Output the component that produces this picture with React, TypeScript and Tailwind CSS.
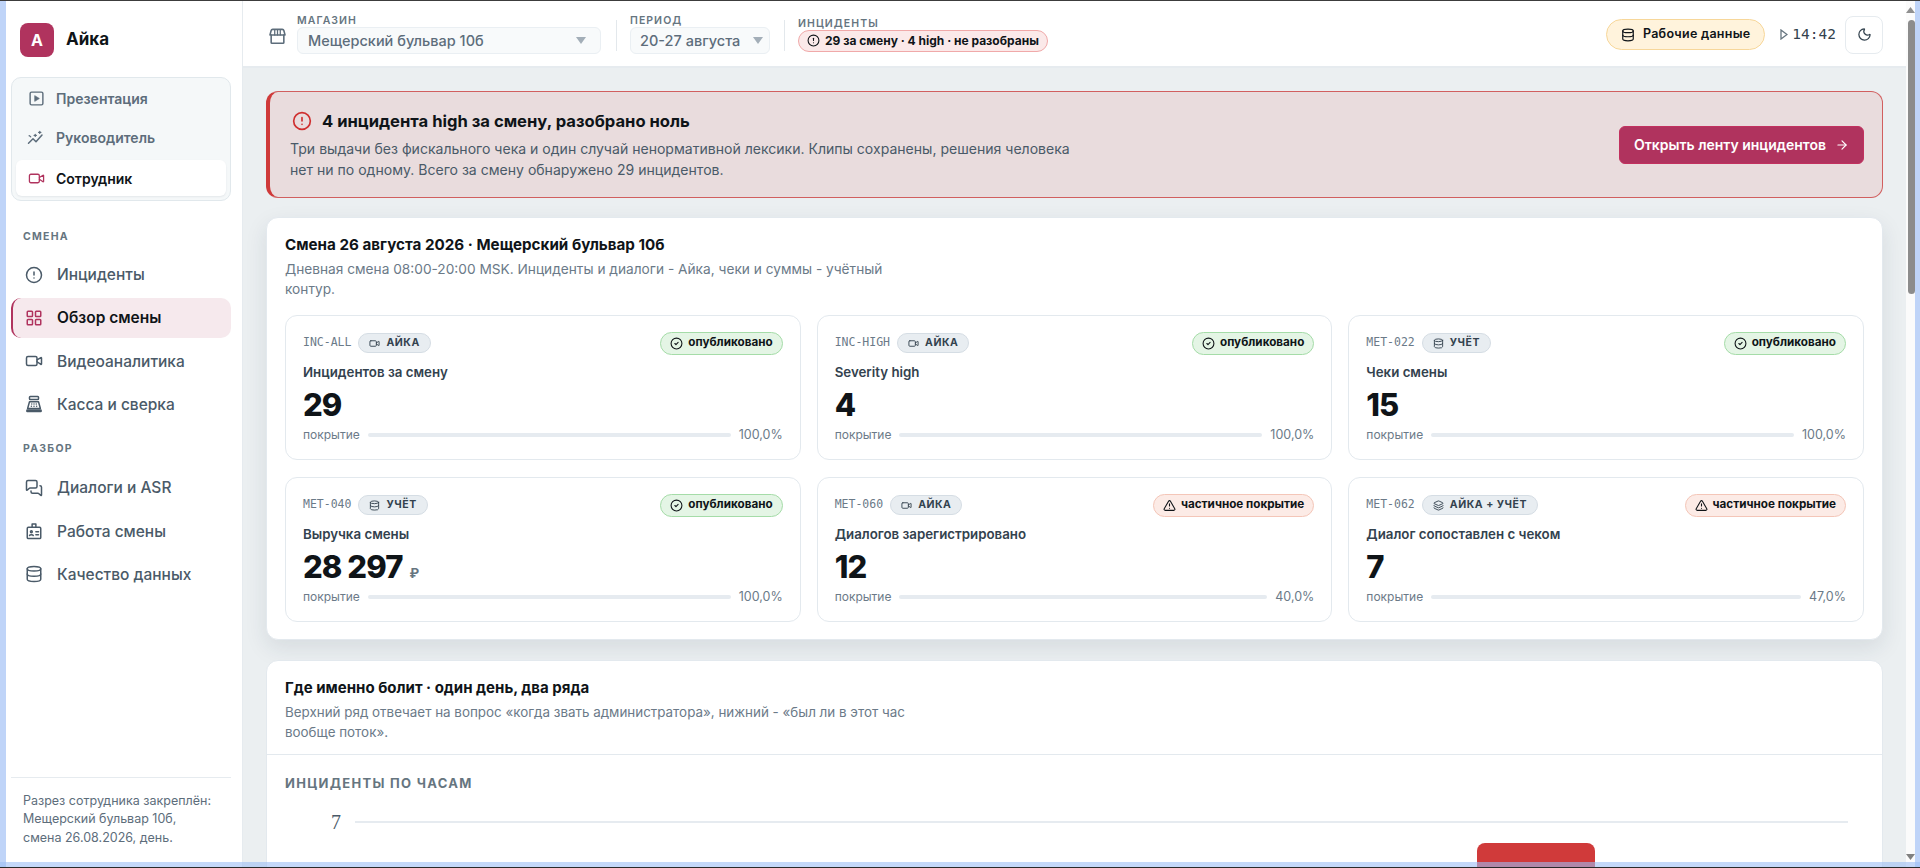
import React from "react";
import {
  Video, CircleAlert, LayoutGrid, MessagesSquare, Database, Moon, ArrowRight,
  CircleCheck, TriangleAlert, Layers,
} from "lucide-react";

function TrendSpark({ className }: { className?: string }) {
  return (
    <svg className={className} viewBox="0 0 24 24" fill="none" stroke="currentColor" strokeWidth="2" strokeLinecap="round" strokeLinejoin="round">
      <path d="M2 19l6-6 4 4 8-9" />
      <path d="M4 9.500l1 1M11 7v3M9.500 8.500h3M17 3v3M15.500 4.500h3" strokeWidth="1.600" />
      <circle cx="3" cy="9" r="1" fill="currentColor" stroke="none" />
    </svg>
  );
}

function PlayBox({ className }: { className?: string }) {
  return (
    <svg className={className} viewBox="0 0 24 24" fill="none" stroke="currentColor" strokeWidth="2" strokeLinejoin="round">
      <rect x="3" y="3" width="18" height="18" rx="2" />
      <path d="M9.500 8l6.500 4-6.500 4z" fill="currentColor" strokeWidth="1" />
    </svg>
  );
}

function StoreIcon({ className }: { className?: string }) {
  return (
    <svg className={className} viewBox="0 0 24 24" fill="none" stroke="currentColor" strokeWidth="2" strokeLinecap="round" strokeLinejoin="round">
      <path d="M4 4.500A2 2 0 0 1 6 3h12a2 2 0 0 1 2 1.500L21.500 10h-19z" />
      <path d="M8.500 3.500V10M12 3.500V10M15.500 3.500V10" strokeWidth="1.600" />
      <path d="M4 10v9.500a1 1 0 0 0 1 1h14a1 1 0 0 0 1-1V10" />
    </svg>
  );
}

function Register({ className }: { className?: string }) {
  return (
    <svg className={className} viewBox="0 0 24 24" fill="none" stroke="currentColor" strokeWidth="2" strokeLinecap="round" strokeLinejoin="round">
      <rect x="6" y="2" width="12" height="4" rx="1" />
      <path d="M6 9h12l2.500 9h-17z" />
      <path d="M9 12h.01M12 12h.01M15 12h.01M8.500 15h.01M12 15h.01M15.500 15h.01" strokeWidth="2" />
      <rect x="2.500" y="20" width="19" height="2" rx=".5" />
    </svg>
  );
}

function IdBadge({ className }: { className?: string }) {
  return (
    <svg className={className} viewBox="0 0 24 24" fill="none" stroke="currentColor" strokeWidth="2" strokeLinecap="round" strokeLinejoin="round">
      <rect x="3" y="7" width="18" height="15" rx="1.500" />
      <path d="M9.500 7V2.500h5V7" />
      <circle cx="8.500" cy="13" r="1.200" />
      <path d="M6 18c.5-1.500 4.500-1.500 5 0M14.500 13H18M14.500 17H18" />
    </svg>
  );
}

function Caret() {
  return (
    <svg width="10" height="7" viewBox="0 0 10 7" className="shrink-0 text-[#a3aeb8]">
      <path d="M0 0h10L5 7z" fill="currentColor" />
    </svg>
  );
}

function SwitchItem({ icon, label, active }: { icon: React.ReactNode; label: string; active?: boolean }) {
  return (
    <div className={active
      ? "mt-[3px] flex h-9 items-center gap-[11px] rounded-md bg-white pl-[12px] text-[14px] font-semibold text-[#0f1418] shadow-[0_1px_2px_rgba(20,40,60,0.08)]"
      : "flex h-[39px] items-center gap-[11px] pl-[12px] text-[14px] font-semibold text-[#5d6d7b]"}>
      {icon}
      <span>{label}</span>
    </div>
  );
}

function NavItem({ icon, label, active }: { icon: React.ReactNode; label: string; active?: boolean }) {
  return (
    <div className={active
      ? "flex h-10 items-center gap-[14px] rounded-[10px] border-l-2 border-[#b0335e] bg-[#f6e9ed] pl-3 text-[15.500px] font-semibold text-[#0f1418]"
      : "flex h-10 items-center gap-[14px] pl-[14px] text-[15.500px] font-medium text-[#4a5a68]"}>
      {icon}
      <span>{label}</span>
    </div>
  );
}

function SectionLabel({ children }: { children: React.ReactNode }) {
  return <div className="pl-3 text-[10.500px] font-bold tracking-[0.12em] text-[#66757f]">{children}</div>;
}

type Tile = {
  code: string; source: string; srcIcon: "video" | "db" | "layers"; title: string; value: string; unit?: string; pct: string; ok: boolean;
};

const tiles: Tile[] = [
  { code: "INC-ALL", source: "АЙКА", srcIcon: "video", title: "Инцидентов за смену", value: "29", pct: "100,0%", ok: true },
  { code: "INC-HIGH", source: "АЙКА", srcIcon: "video", title: "Severity high", value: "4", pct: "100,0%", ok: true },
  { code: "MET-022", source: "УЧЁТ", srcIcon: "db", title: "Чеки смены", value: "15", pct: "100,0%", ok: true },
  { code: "MET-040", source: "УЧЁТ", srcIcon: "db", title: "Выручка смены", value: "28 297", unit: "₽", pct: "100,0%", ok: true },
  { code: "MET-060", source: "АЙКА", srcIcon: "video", title: "Диалогов зарегистрировано", value: "12", pct: "40,0%", ok: false },
  { code: "MET-062", source: "АЙКА + УЧЁТ", srcIcon: "layers", title: "Диалог сопоставлен с чеком", value: "7", pct: "47,0%", ok: false },
];

function MetricTile({ t }: { t: Tile }) {
  const SrcIcon = t.srcIcon === "video" ? Video : t.srcIcon === "db" ? Database : Layers;
  return (
    <div className="flex h-[145px] flex-col rounded-xl border border-[#e3e9ee] bg-white px-[17px] pt-[15px]">
      <div className="flex h-[24px] items-center justify-between">
        <div className="flex items-center gap-[7px]">
          <span className="font-['DejaVu_Sans_Mono',monospace] text-[11.500px] text-[#6b7a88]">{t.code}</span>
          <span className="flex h-[20px] items-center gap-[6px] rounded-full border border-[#d5dde4] bg-[#e8edf1] px-[10px] text-[10.500px] font-bold tracking-[0.05em] text-[#33424e]">
            <SrcIcon size={11} strokeWidth={2} />
            {t.source}
          </span>
        </div>
        {t.ok ? (
          <span className="flex h-[23px] items-center gap-[5px] rounded-full border border-[#a5dca8] bg-[#e4f5e5] px-[9px] text-[11.700px] font-bold text-[#0f1418]">
            <CircleCheck size={13} strokeWidth={2} />
            опубликовано
          </span>
        ) : (
          <span className="flex h-[23px] items-center gap-[5px] rounded-full border border-[#f4c6b8] bg-[#fcebe6] px-[9px] text-[11.700px] font-bold text-[#0f1418]">
            <TriangleAlert size={13} strokeWidth={2} />
            частичное покрытие
          </span>
        )}
      </div>
      <div className="mt-[6.500px] text-[13.300px] font-semibold leading-[20px] text-[#33424e]">{t.title}</div>
      <div className="mt-[5px] flex h-[36px] items-baseline gap-[7px] text-[31px] font-extrabold leading-[36px] tracking-[-0.03em] text-[#0f1418]">
        {t.value}
        {t.unit && <span className="text-[13px] font-bold tracking-normal text-[#66757f]">{t.unit}</span>}
      </div>
      <div className="mt-[4.500px] flex items-center gap-[8px] text-[12px] leading-[16px] text-[#6b7a88]">
        <span>покрытие</span>
        <div className="h-[3.500px] flex-1 rounded-full bg-[#e6ebf0]" />
        <span className="text-[12.500px]">{t.pct}</span>
      </div>
    </div>
  );
}

export default function App() {
  return (
    <div className="relative flex h-[868px] w-[1920px] flex-col overflow-hidden border-t border-[#3c3c3c] bg-[#bfd4f8] font-['Inter',sans-serif]">
      <div className="flex min-h-0 flex-1 pl-[6px] pr-[5px]">
        <aside className="flex w-[237px] shrink-0 flex-col border-r border-[#e6ebef] bg-white pl-[5px] pr-[11px]">
          <div className="mt-[22px] flex items-center gap-3 pl-[9px]">
            <div className="flex h-[34px] w-[34px] items-center justify-center rounded-lg bg-[#b0335e] text-[16px] font-bold text-white">A</div>
            <div className="text-[17px] font-bold text-[#0f1418]">Айка</div>
          </div>
          <div className="mt-[20px] flex h-[124px] flex-col rounded-[10px] border border-[#e1e8ec] bg-[#f5f8f9] px-[4px] pt-[1px]">
            <SwitchItem icon={<PlayBox className="h-[17px] w-[17px] text-[#5d6d7b]" />} label="Презентация" />
            <SwitchItem icon={<TrendSpark className="h-[18px] w-[18px] -ml-[1px] text-[#5d6d7b]" />} label="Руководитель" />
            <SwitchItem active icon={<Video size={17} strokeWidth={1.800} className="text-[#b0335e]" />} label="Сотрудник" />
          </div>
          <div className="mt-[28px]"><SectionLabel>СМЕНА</SectionLabel></div>
          <div className="mt-[10px] flex flex-col gap-[3.200px]">
            <NavItem icon={<CircleAlert size={18} strokeWidth={2} />} label="Инциденты" />
            <NavItem active icon={<LayoutGrid size={18} strokeWidth={2} className="text-[#b0335e]" />} label="Обзор смены" />
            <NavItem icon={<Video size={18} strokeWidth={2} />} label="Видеоаналитика" />
            <NavItem icon={<Register className="h-[18px] w-[18px]" />} label="Касса и сверка" />
          </div>
          <div className="mt-[17px]"><SectionLabel>РАЗБОР</SectionLabel></div>
          <div className="mt-[11px] flex flex-col gap-[3.200px]">
            <NavItem icon={<MessagesSquare size={18} strokeWidth={2} />} label="Диалоги и ASR" />
            <NavItem icon={<IdBadge className="h-[18px] w-[18px]" />} label="Работа смены" />
            <NavItem icon={<Database size={18} strokeWidth={2} />} label="Качество данных" />
          </div>
          <div className="mt-auto mb-[21px] border-t border-[#e6ebef] px-3 pt-[14px] text-[12.500px] leading-[18.500px] text-[#5d6d7b]">
            Разрез сотрудника закреплён:<br />Мещерский бульвар 10б,<br />смена 26.08.2026, день.
          </div>
        </aside>

        <div className="flex min-w-0 flex-1 flex-col">
          <header className="flex h-[67px] shrink-0 items-center border-b-2 border-[#e6ebef] bg-white pl-[25px] pr-[23px] pt-[2px]">
            <StoreIcon className="mt-[4px] h-[19px] w-[19px] text-[#5d6d7b]" />
            <div className="ml-[10px] flex h-[39px] w-[304px] flex-col justify-between">
              <div className="text-[10.500px] font-semibold leading-[12px] tracking-[0.1em] text-[#66757f]">МАГАЗИН</div>
              <div className="flex h-[27px] items-center justify-between rounded-md border border-[#eaeff3] bg-[#f8fafb] pl-[10px] pr-[14px] text-[14.500px] font-medium text-[#5d6d7b]">
                <span>Мещерский бульвар 10б</span><Caret />
              </div>
            </div>
            <div className="ml-[15px] mt-[1px] h-[31px] w-px bg-[#e3e8ec]" />
            <div className="ml-[13px] flex h-[39px] w-[140px] flex-col justify-between">
              <div className="text-[10.500px] font-semibold leading-[12px] tracking-[0.1em] text-[#66757f]">ПЕРИОД</div>
              <div className="flex h-[27px] items-center justify-between rounded-md border border-[#eaeff3] bg-[#f8fafb] pl-[9px] pr-[6px] text-[14.500px] font-medium text-[#5d6d7b]">
                <span>20-27 августа</span><Caret />
              </div>
            </div>
            <div className="ml-[14px] mt-[1px] h-[31px] w-px bg-[#e3e8ec]" />
            <div className="ml-[13px] flex h-[34px] flex-col justify-between">
              <div className="text-[10.500px] font-semibold leading-[12px] tracking-[0.1em] text-[#66757f]">ИНЦИДЕНТЫ</div>
              <div className="flex h-[22px] items-center gap-[5px] rounded-full border border-[#f0a9a9] bg-[#fbe9e9] px-[8px] text-[12px] font-bold text-[#0f1418]">
                <CircleAlert size={13} strokeWidth={2} />
                29 за смену · 4 high · не разобраны
              </div>
            </div>
            <div className="ml-auto flex items-center">
              <div className="flex h-[31px] items-center gap-[8px] rounded-full border border-[#f7d79a] bg-[#fff3dc] px-[14px] text-[12.500px] font-semibold tracking-[0.02em] text-[#0f1418]">
                <Database size={14} strokeWidth={2} />
                Рабочие данные
              </div>
              <svg width="8" height="11" viewBox="0 0 8 11" className="ml-[15px] text-[#66757f]"><path d="M1 1l6 4.500-6 4.500z" fill="none" stroke="currentColor" strokeWidth="1.300" /></svg>
              <span className="ml-[4px] font-['DejaVu_Sans_Mono',monospace] text-[14.500px] text-[#33424e]">14:42</span>
              <div className="ml-[9px] flex h-[38px] w-[38px] items-center justify-center rounded-lg border border-[#e6ebef] bg-white text-[#33424e]">
                <Moon size={15} strokeWidth={2} />
              </div>
            </div>
          </header>

          <main className="flex min-h-0 flex-1 flex-col gap-[19px] overflow-hidden bg-[#ebeff1] pb-0 pl-[23px] pr-[23px] pt-[23px]">
            <section className="flex h-[107px] shrink-0 items-center justify-between rounded-xl border border-l-4 border-[#d15f5f] border-l-[#cf3a3a] bg-[#e9dcdd] pl-[20px] pr-[18px]">
              <div>
                <div className="flex items-center gap-[10px] pl-[2px] text-[16.600px] font-bold text-[#0f1418]">
                  <CircleAlert size={20} strokeWidth={2} className="text-[#cf2f2f]" />
                  4 инцидента high за смену, разобрано ноль
                </div>
                <p className="mt-[5px] w-[800px] text-[14.050px] leading-[21px] text-[#4a5a68]">
                  Три выдачи без фискального чека и один случай ненормативной лексики. Клипы сохранены, решения человека нет ни по одному. Всего за смену обнаружено 29 инцидентов.
                </p>
              </div>
              <div className="flex h-[38px] w-[245px] items-center justify-center gap-[9px] rounded-md border border-[#c2315f] bg-[#b0335e] text-[14px] font-semibold text-white">
                Открыть ленту инцидентов
                <ArrowRight size={14} strokeWidth={2} />
              </div>
            </section>

            <section className="shrink-0 rounded-xl border border-[#e3e9ee] bg-white px-[18px] pb-[17px] pt-[17px] shadow-[0_8px_22px_rgba(30,50,70,0.1)]">
              <h2 className="text-[15.200px] font-bold leading-[20px] text-[#0f1418]">Смена 26 августа 2026 · Мещерский бульвар 10б</h2>
              <p className="mt-[4px] w-[620px] text-[13.700px] leading-[20px] text-[#6b7a88]">
                Дневная смена 08:00-20:00 MSK. Инциденты и диалоги - Айка, чеки и суммы - учётный контур.
              </p>
              <div className="mt-[16px] grid grid-cols-3 gap-x-[16px] gap-y-[17px]">
                {tiles.map((t) => <MetricTile key={t.code} t={t} />)}
              </div>
            </section>

            <section className="mt-[1px] shrink-0 rounded-xl border border-[#e3e9ee] bg-white">
              <div className="border-b border-[#e3e9ee] px-[18px] pb-[12px] pt-[17px]">
                <h2 className="text-[15px] font-bold leading-[20px] text-[#0f1418]">Где именно болит · один день, два ряда</h2>
                <p className="mt-[4px] w-[640px] text-[13.400px] leading-[20px] text-[#6b7a88]">
                  Верхний ряд отвечает на вопрос «когда звать администратора», нижний - «был ли в этот час вообще поток».
                </p>
              </div>
              <div className="px-[18px] pt-[20px]">
                <div className="text-[13px] font-bold leading-[16px] tracking-[0.1em] text-[#66757f]">ИНЦИДЕНТЫ ПО ЧАСАМ</div>
                <div className="mt-[19px] flex h-[24px] items-center">
                  <span className="ml-[46px] w-[24px] font-['Liberation_Serif',serif] text-[20px] text-[#4a5a68]">7</span>
                  <div className="h-[2px] w-[1493px] bg-[#e6ebf0]" />
                </div>
                <div className="ml-[1192px] mt-[9px] h-[40px] w-[118px] rounded-t-lg bg-[#d03a3a]" />
              </div>
            </section>
          </main>
        </div>

        <div className="flex w-[9px] shrink-0 flex-col items-end bg-[#fbfbfb] pr-0">
          <svg width="9" height="7" viewBox="0 0 9 7" className="mt-[6px] text-[#8f8f8f]"><path d="M4.500 0L9 6H0z" fill="currentColor" /></svg>
          <div className="mt-[6px] h-[274px] w-[7px] rounded-sm bg-[#8c8c8c]" />
          <svg width="9" height="7" viewBox="0 0 9 7" className="mb-[7px] mt-auto text-[#808080]"><path d="M0 0h9L4.500 6z" fill="currentColor" /></svg>
        </div>
      </div>
      <div className="pointer-events-none absolute bottom-[1px] left-0 right-0 h-[5px] bg-[#9cbef5]/60" />
      <div className="absolute bottom-0 left-0 right-0 h-px bg-[#2a2a2a]" />
    </div>
  );
}
